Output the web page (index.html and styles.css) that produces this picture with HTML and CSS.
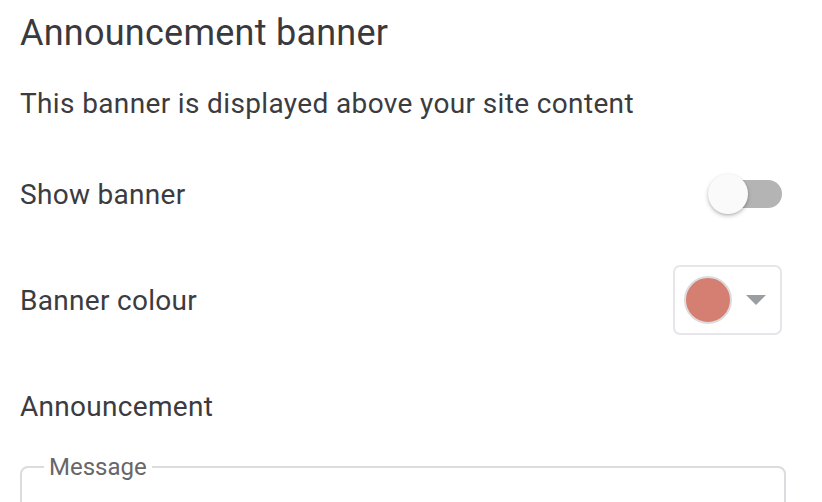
FILE: index.html
```html
<!DOCTYPE html>
<html lang="en">
<head>
<meta charset="utf-8">
<title>Announcement banner</title>
<link rel="stylesheet" href="styles.css">
</head>
<body>
<main class="panel">
  <h1 class="title">Announcement banner</h1>
  <p class="desc">This banner is displayed above your site content</p>
  <div class="row row-toggle">
    <span class="label">Show banner</span>
    <span class="switch"><span class="track"></span><span class="thumb"></span></span>
  </div>
  <div class="row row-colour">
    <span class="label">Banner colour</span>
    <div class="picker">
      <span class="swatch"></span>
      <span class="caret"></span>
    </div>
  </div>
  <div class="section-label">Announcement</div>
  <fieldset class="field">
    <legend class="legend">Message</legend>
  </fieldset>
</main>
</body>
</html>
```
FILE: styles.css
```css
html, body {
  margin: 0;
  padding: 0;
  background: #ffffff;
}
body {
  font-family: Roboto, "Liberation Sans", sans-serif;
  color: #3b3b40;
  letter-spacing: 0.3px;
}
.panel {
  padding: 11px 37px 0 20px;
}
.title {
  margin: 0;
  font-size: 36px;
  font-weight: 400;
  line-height: 44px;
  letter-spacing: 0.25px;
  color: #39393e;
}
.desc {
  margin: 31px 0 0 0;
  font-size: 28px;
  line-height: 36px;
  letter-spacing: 0.36px;
}
.row {
  display: flex;
  align-items: center;
  justify-content: space-between;
  font-size: 28px;
}
.row-toggle {
  margin-top: 52px;
  height: 40px;
}
.switch {
  position: relative;
  width: 74px;
  height: 40px;
  margin-right: 3px;
}
.track {
  position: absolute;
  left: 8px;
  right: 0;
  top: 6px;
  height: 28px;
  border-radius: 14px;
  background: #b4b4b4;
}
.thumb {
  position: absolute;
  left: 0;
  top: 0;
  width: 40px;
  height: 40px;
  border-radius: 50%;
  background: #fafafa;
  box-shadow: 0 2px 4px rgba(0,0,0,0.22), 0 1px 2px rgba(0,0,0,0.1);
}
.row-colour {
  margin-top: 51px;
  height: 70px;
}
.picker {
  box-sizing: border-box;
  width: 109px;
  height: 70px;
  border: 2px solid #e6e6ea;
  border-radius: 7px;
  display: flex;
  align-items: center;
  padding-left: 9px;
  gap: 14px;
  margin-right: 3px;
}
.swatch {
  box-sizing: border-box;
  width: 48px;
  height: 48px;
  border-radius: 50%;
  background: #d47f72;
  border: 2px solid #dcdcdf;
}
.caret {
  width: 0;
  height: 0;
  border-left: 10px solid transparent;
  border-right: 10px solid transparent;
  border-top: 10px solid #9b9ea1;
}
.section-label {
  margin-top: 54px;
  font-size: 28px;
  line-height: 36px;
}
.field {
  margin: 28px -1px 0 0;
  padding: 0 0 0 22px;
  height: 60px;
  border: 2px solid #dcdce0;
  border-radius: 8px;
}
.legend {
  padding: 0 5px;
  font-size: 24px;
  letter-spacing: 0;
  color: #66666b;
}
```
